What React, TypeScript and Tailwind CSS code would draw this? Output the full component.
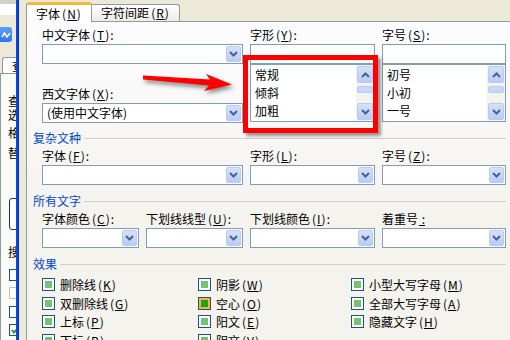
import React from 'react';

const Acc = ({ k }: { k: string }) => (
  <span className="ml-[2px] tracking-[1px]">
    (<span className="underline">{k}</span>)
  </span>
);

const Label = ({ text, k }: { text: string; k: string }) => (
  <div className="h-[18px] leading-[18px] text-[12px] whitespace-nowrap text-black">
    {text}
    <Acc k={k} />:
  </div>
);

const Chevron = ({ up }: { up?: boolean }) => (
  <svg width="9" height="6" viewBox="0 0 9 6">
    <path
      d={up ? 'M1 5 L4.5 1.5 L8 5' : 'M1 1 L4.5 4.5 L8 1'}
      stroke="#4D6185"
      strokeWidth="2"
      fill="none"
    />
  </svg>
);

const DropBtn = () => (
  <div className="w-[15px] h-[16px] m-[1px] rounded-[2px] border border-[#B9CBF3] bg-linear-to-b from-[#D5E1FC] to-[#B8CCF7] flex items-center justify-center">
    <Chevron />
  </div>
);

const Combo = ({ value }: { value?: string }) => (
  <div className="h-[20px] border border-[#7F9DB9] bg-white flex">
    <div className="flex-1 pl-[4px] text-[12px] leading-[18px] whitespace-nowrap overflow-hidden">{value}</div>
    <DropBtn />
  </div>
);

const TextBox = () => <div className="h-[20px] border border-[#7F9DB9] bg-white" />;

const ScrollBtn = ({ up }: { up?: boolean }) => (
  <div className="h-[17px] rounded-[2px] border border-[#B9CBF3] bg-linear-to-b from-[#D5E1FC] to-[#B8CCF7] flex items-center justify-center">
    <Chevron up={up} />
  </div>
);

const ListBox = ({ items }: { items: string[] }) => (
  <div className="h-[58px] border border-[#7F9DB9] bg-white flex">
    <div className="flex-1 pl-[4px] pt-[1px]">
      {items.map((it) => (
        <div key={it} className="h-[18px] leading-[18px] text-[12px]">
          {it}
        </div>
      ))}
    </div>
    <div className="w-[18px] px-[1px] py-[1px] bg-[#F4F3EC] flex flex-col">
      <ScrollBtn up />
      <div className="mt-[3px] h-[7px] rounded-[2px] border border-[#B9CBF3] bg-[#C9D8FA]" />
      <div className="flex-1" />
      <ScrollBtn />
    </div>
  </div>
);

const Heading = ({ text }: { text: string }) => (
  <div className="h-[14px] flex items-center gap-[3px]">
    <span className="text-[#0046D5] text-[12px] leading-[14px] whitespace-nowrap">{text}</span>
    <div className="flex-1 h-px bg-[#D0D0BF]" />
  </div>
);

const Check = ({ hot }: { hot?: boolean }) => (
  <div className="w-[13px] h-[13px] shrink-0 border border-[#1C5180] bg-white flex items-center justify-center">
    {hot ? (
      <div className="w-[11px] h-[11px] border-2 border-[#F8B636] flex items-center justify-center">
        <div className="w-[7px] h-[7px] bg-[#21A121]" />
      </div>
    ) : (
      <div className="w-[7px] h-[7px] bg-[#73C373]" />
    )}
  </div>
);

const CheckItem = ({ text, k, hot }: { text: string; k: string; hot?: boolean }) => (
  <div className="h-[13px] flex items-center gap-[5px] text-[12px] whitespace-nowrap">
    <Check hot={hot} />
    <span className="leading-[13px]">
      {text}
      <Acc k={k} />
    </span>
  </div>
);

const effects: [string, string, boolean?][][] = [
  [['删除线', 'K'], ['阴影', 'W'], ['小型大写字母', 'M']],
  [['双删除线', 'G'], ['空心', 'O', true], ['全部大写字母', 'A']],
  [['上标', 'P'], ['阳文', 'E'], ['隐藏文字', 'H']],
  [['下标', 'B'], ['阴文', 'V']],
];

// window behind the dialog, only its right edge shows
function LeftStrip() {
  return (
    <div className="w-[16px] shrink-0 flex flex-col overflow-hidden bg-[#ECE9D8]">
      <div className="h-[4px] bg-[#D4D0C8]" />
      <div className="h-[11px] bg-white" />
      <div className="h-[12px]" />
      <div className="h-[15px] w-[12px] rounded-r-[3px] bg-linear-to-b from-[#5BA0F8] to-[#2F74EA] flex items-center justify-center">
        <svg width="10" height="8" viewBox="0 0 10 8">
          <path d="M1 6 L3.5 2 L6 6 L9 2" stroke="white" strokeWidth="1.5" fill="none" />
        </svg>
      </div>
      <div className="h-[15px]" />
      <div className="h-[16px] ml-[2px] border-t border-l border-[#919B9C] rounded-tl-[3px] bg-white pl-[9px] text-[12px] leading-[16px] overflow-hidden">
        查
      </div>
      <div className="flex-1 border-l border-t border-[#919B9C] bg-[#FAFAF7] flex flex-col pl-[7px] text-[12px] overflow-hidden">
        <div className="mt-[20px] h-[14px] leading-[14px]">查</div>
        <div className="h-[14px] leading-[14px]">选</div>
        <div className="mt-[2px] h-[18px] leading-[18px]">格</div>
        <div className="mt-[2px] h-[18px] leading-[18px]">替</div>
        <div className="mt-[36px] h-[32px] ml-[1px] w-[20px] border border-[#003C74] rounded-l-[3px] bg-white" />
        <div className="mt-[13px] h-[18px] leading-[18px]">搜</div>
        <div className="mt-[8px] h-[12px] ml-[1px] w-[12px] border border-[#1C5180] bg-white" />
        <div className="mt-[6px] h-[12px] ml-[1px] w-[12px] border border-[#C0C0B8] bg-white" />
        <div className="mt-[7px] h-[12px] ml-[1px] w-[12px] border border-[#1C5180] bg-white" />
        <div className="mt-[6px] h-[12px] ml-[1px] w-[12px] border border-[#1C5180] bg-white flex items-center justify-center">
          <svg width="8" height="7" viewBox="0 0 8 7">
            <path d="M1 3 L3 5.5 L7 1" stroke="#21A121" strokeWidth="2" fill="none" />
          </svg>
        </div>
      </div>
    </div>
  );
}

export default function App() {
  return (
    <div className="w-[510px] h-[340px] overflow-hidden relative flex bg-[#ECE9D8] text-black font-['Noto_Sans_CJK_SC','Noto_Sans',sans-serif]">
      <LeftStrip />
      <div className="w-[3px] shrink-0 bg-[#0B45E8] border-r border-[#0A32B8]" />

      <div className="flex-1 flex flex-col min-w-0">
        {/* tabs */}
        <div className="h-[21px] shrink-0 flex items-end pl-[7px] relative z-10">
          <div className="w-[66px] h-[20px] -mb-px bg-white border-x border-[#919B9C] rounded-t-[3px] border-t-[3px] border-t-[#F6B63A] flex items-center justify-center text-[12px] whitespace-nowrap">
            字体
            <Acc k="N" />
          </div>
          <div className="w-[88px] h-[17px] bg-linear-to-b from-white to-[#ECEBE6] border-t border-r border-[#919B9C] rounded-tr-[3px] flex items-center justify-center text-[12px] whitespace-nowrap">
            字符间距
            <Acc k="R" />
          </div>
        </div>

        {/* tab panel */}
        <div className="flex-1 ml-[7px] border-l border-t border-[#919B9C] bg-linear-to-b from-[#FCFCFE] to-[#F4F3EE] to-60% pl-[6px] pr-[4px] pt-[4px] flex flex-col">
          <div className="ml-[9px] grid grid-cols-[201px_125px_124px] gap-x-[7px]">
            <div className="flex flex-col">
              <Label text="中文字体" k="T" />
              <Combo />
              <div className="mt-[21px]">
                <Label text="西文字体" k="X" />
              </div>
              <Combo value="(使用中文字体)" />
            </div>
            <div className="flex flex-col">
              <Label text="字形" k="Y" />
              <TextBox />
              <ListBox items={['常规', '倾斜', '加粗']} />
            </div>
            <div className="flex flex-col">
              <Label text="字号" k="S" />
              <TextBox />
              <ListBox items={['初号', '小初', '一号']} />
            </div>
          </div>

          <div className="mt-[8px]">
            <Heading text="复杂文种" />
          </div>
          <div className="ml-[9px] mt-[2px] grid grid-cols-[201px_125px_124px] gap-x-[7px]">
            <div>
              <Label text="字体" k="F" />
              <Combo />
            </div>
            <div>
              <Label text="字形" k="L" />
              <Combo />
            </div>
            <div>
              <Label text="字号" k="Z" />
              <Combo />
            </div>
          </div>

          <div className="mt-[9px]">
            <Heading text="所有文字" />
          </div>
          <div className="ml-[9px] mt-[2px] grid grid-cols-[97px_97px_125px_124px] gap-x-[7px]">
            <div>
              <Label text="字体颜色" k="C" />
              <Combo />
            </div>
            <div>
              <Label text="下划线线型" k="U" />
              <Combo />
            </div>
            <div>
              <Label text="下划线颜色" k="I" />
              <Combo />
            </div>
            <div>
              <div className="h-[18px] leading-[18px] text-[12px] whitespace-nowrap">
                着重号<span className="underline ml-[1px]">&nbsp;:</span>
              </div>
              <Combo />
            </div>
          </div>

          <div className="mt-[9px]">
            <Heading text="效果" />
          </div>
          <div className="ml-[9px] mt-[7px] flex flex-col gap-[5.67px]">
            {effects.map((row, i) => (
              <div key={i} className="grid grid-cols-[156px_153px_auto]">
                {row.map(([t, k, hot]) => (
                  <CheckItem key={t} text={t} k={k} hot={hot} />
                ))}
              </div>
            ))}
          </div>
        </div>
      </div>

      {/* annotation: red arrow */}
      <svg
        className="absolute left-[140px] top-[70px] drop-shadow-[2px_3px_2px_rgba(0,0,0,0.45)]"
        width="100"
        height="26"
        viewBox="140 70 100 26"
      >
        <polygon
          points="143,75.5 210,79.5 206,74 232,84.5 204,91 209,85.5 143,79.5"
          fill="#FF0000"
        />
      </svg>

      {/* annotation: red box */}
      <div className="absolute left-[243px] top-[55px] w-[135px] h-[78px] border-[5px] border-[#FF0000] shadow-[3px_3px_3px_rgba(0,0,0,0.4)]" />
    </div>
  );
}
